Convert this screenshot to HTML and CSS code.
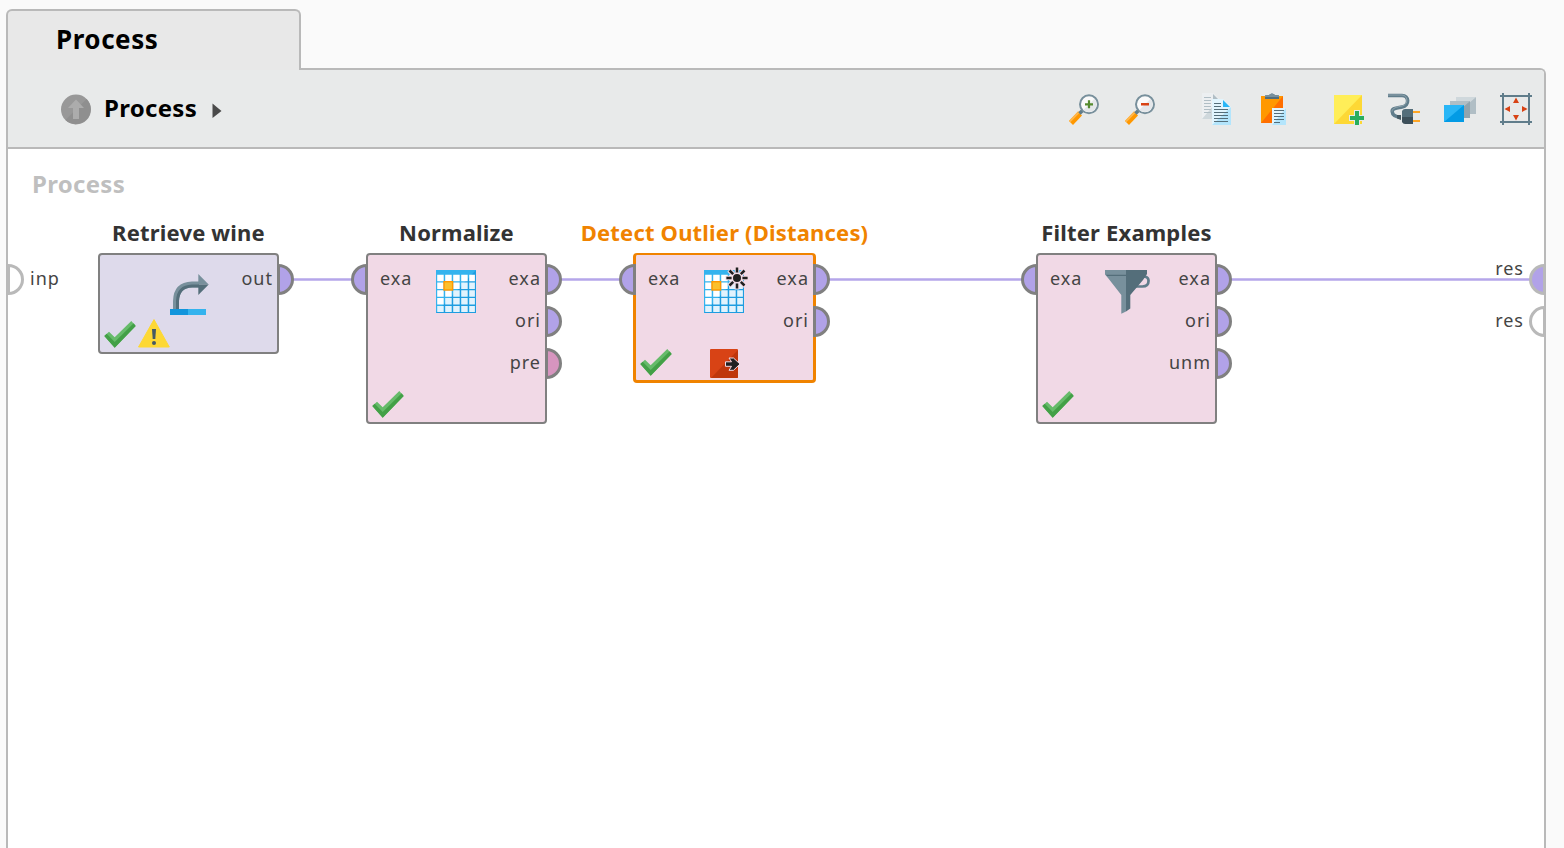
FILE: index.html
```html
<!DOCTYPE html>
<html lang="en">
<head>
<meta charset="utf-8">
<title>Process</title>
<link rel="stylesheet" href="styles.css">
</head>
<body>
<svg class="defs" aria-hidden="true">
  <defs>
    <symbol id="port-out" viewBox="0 0 17 31"><path d="M1.5 1.5A14 14 0 0 1 1.5 29.5Z" stroke-width="3"/></symbol>
    <symbol id="port-in" viewBox="0 0 17 31"><path d="M15.5 1.5A14 14 0 0 0 15.5 29.5Z" stroke-width="3"/></symbol>
    <symbol id="check" viewBox="0 0 32 32">
      <path fill="#66bb6a" d="M.3 18 5 13.7l5.7 5.6L27.3 3l4.4 5-21 21.7z"/>
      <path fill="#43a047" d="M.3 18l2.4-2.2 8 8.2 19-18.7L31.7 8l-21 21.7z"/>
    </symbol>
    <symbol id="warn" viewBox="0 0 32 32">
      <path fill="#fdd835" stroke="#fdd835" stroke-linejoin="round" d="M16 1.6 31.3 29H.5z"/>
      <path fill="#455a64" d="M14 11h4l-.7 10h-2.6z"/><circle cx="16" cy="25" r="2" fill="#455a64"/>
    </symbol>
    <symbol id="breakpoint" viewBox="0 0 32 32">
      <rect x="2" y="3" width="28" height="29" rx="1" fill="#d84315"/>
      <path fill="#bf360c" d="M30 4v27q0 1-1 1H3z"/>
      <path fill="#212121" stroke="#f3dbe6" stroke-width="1" d="M17.500 15.800h6l-2.500-3.800h4.500l6.500 6-6.500 6.300h-4.500l2.500-4h-6z"/>
    </symbol>
    <symbol id="table" viewBox="0 0 48 48">
      <path fill="#1e9de0" d="M4 2h40v43H4z"/>
      <path fill="#34b3ee" d="M4 2h40L4 45z"/>
      <g fill="#fff">
        <path d="M5.200 6.700h6.500v6.500H5.200zm8 0h6.500v6.500h-6.500zm8 0h6.500v6.500h-6.500zm8 0h6.500v6.500h-6.500zm8 0h5.700v6.500h-5.700z"/>
        <path d="M5.200 14.500h6.500v6.500H5.200zm8 0h6.500v6.500h-6.500zm8 0h6.500v6.500h-6.500z"/>
        <path d="M5.200 22.300h6.500v6.500H5.200zm8 0h6.500v6.500h-6.500zM5.200 30.100h6.500v6.500H5.200z"/>
      </g>
      <path fill="#e1f3fd" d="M29.200 14.500h6.500v6.500h-6.500zm8 0h5.700v6.500h-5.700zM21.200 22.300h6.500v6.500h-6.500zm8 0h6.500v6.500h-6.500zm8 0h5.700v6.500h-5.700zM13.200 30.100h6.500v6.500h-6.500zm8 0h6.500v6.500h-6.500zm8 0h6.500v6.500h-6.500zm8 0h5.700v6.500h-5.700zM5.200 37.900h6.500v6H5.200zm8 0h6.500v6h-6.500zm8 0h6.500v6h-6.500zm8 0h6.500v6h-6.500zm8 0h5.700v6h-5.700z"/>
      <rect x="12" y="13.700" width="8.600" height="8.300" fill="#fbc02d" stroke="#ff9800" stroke-width="1.400"/>
    </symbol>
    <symbol id="burst" viewBox="0 0 24 24">
      <path stroke="#f3dbe6" stroke-width="4.600" d="M12 .5v6M12 17.500v6M.5 12h6M17.500 12h6M4 4l4 4M16 16l4 4M4 20l4-4M16 8l4-4"/>
      <circle cx="12" cy="12" r="6" fill="#f3dbe6"/><circle cx="12" cy="12" r="4" fill="#212121"/>
      <path stroke="#212121" stroke-width="2.500" d="M12 1.400v5.200M12 17.400v5.200M1.400 12h5.200M17.400 12h5.200M4.500 4.500l3.700 3.700M15.800 15.800l3.700 3.700M4.500 19.500l3.700-3.700M15.800 8.200l3.700-3.700"/>
    </symbol>
    <symbol id="funnel" viewBox="0 0 48 48">
      <path fill="none" stroke="#607d8b" stroke-width="2.700" d="M38.500 9.400q7.500-2.500 8 3 .3 6.100-6.300 6.100h-7"/>
      <path fill="#78909c" d="M3 2h21v41.500l-4.700 2.200V27L6 10 3 6.500z"/>
      <path fill="#546e7a" d="M24 2h21v4l-4 6-12.700 15v13.500L24 43.500z"/>
      <path fill="#546e7a" d="M4 6.700h20v1.200H5z"/>
    </symbol>
    <symbol id="retrieve" viewBox="0 0 48 48">
      <path fill="#1295dc" d="M6 41h18v6H6z"/><path fill="#34b3ee" d="M24 41h18v6H24z"/>
      <path fill="none" stroke="#78909c" stroke-width="6" d="M12 41V33Q12.500 17 28 16.500h7"/>
      <path fill="none" stroke="#546e7a" stroke-width="3" d="M13.500 41V33Q14 18.500 28 18h7"/>
      <path fill="#78909c" d="M34.300 6v10.500h10.400z"/><path fill="#546e7a" d="M34.300 27V16.500h10.400z"/>
    </symbol>
  </defs>
</svg>

<div class="app">
  <div class="tab">Process</div>
  <main class="panel">
    <header class="toolbar">
      <svg class="up" viewBox="0 0 30 31"><circle cx="15" cy="15.500" r="15" fill="#989898"/><path fill="#8f8f8f" d="M25.600 4.900A15 15 0 0 1 4.400 26.100z"/><path fill="#acacac" d="M15 5.500l8 8.500h-5v11h-6V14H7z"/></svg>
      <span class="crumb">Process</span>
      <svg class="caret" viewBox="0 0 10 16"><path fill="#4a4a4a" d="M.5.500 9.500 8 .5 15z"/></svg>
      <div class="tools">
        <div class="group">
          <svg viewBox="0 0 32 32"><path stroke="#ff9800" stroke-width="5.500" d="M3 30 12 20.500"/><path stroke="#ffb74d" stroke-width="2" d="M1.700 28.500 11 19"/><path stroke="#607d8b" stroke-width="3.500" d="M11.500 20.500l3-3"/><circle cx="21" cy="11.300" r="9" fill="#fafafa" stroke="#78909c" stroke-width="2"/><path fill="#e4e7ea" d="M26.600 5.700a8 8 0 0 1-11.300 11.300z"/><path stroke="#558b2f" stroke-width="2.200" d="M17 11.300h8M21 7.300v8"/></svg>
          <svg viewBox="0 0 32 32"><path stroke="#ff9800" stroke-width="5.500" d="M3 30 12 20.500"/><path stroke="#ffb74d" stroke-width="2" d="M1.700 28.500 11 19"/><path stroke="#607d8b" stroke-width="3.500" d="M11.500 20.500l3-3"/><circle cx="21" cy="11.300" r="9" fill="#fafafa" stroke="#78909c" stroke-width="2"/><path fill="#e4e7ea" d="M26.600 5.700a8 8 0 0 1-11.300 11.300z"/><path stroke="#d84315" stroke-width="2.600" d="M17 11.300h8"/></svg>
        </div>
        <div class="group">
          <svg viewBox="0 0 32 32"><path fill="#eceff1" d="M2 0h11l6 6v20H2z"/><path fill="#cfd8dc" d="M19 6v20H2z"/><path fill="#b0bec5" d="M13 1v5h5z"/><path stroke="#b0bec5" stroke-width="1" d="M4 4.500h7M4 7.500h7M4 10.500h7M4 13.500h7M4 16.500h7M4 19.500h7"/><path fill="#e1f5fe" d="M12 6h11l8 8v18H12z"/><path fill="#b3e5fc" d="M31 14v18H12z"/><path fill="#29b6f6" d="M23 7v7h7z"/><path stroke="#546e7a" stroke-width="1" d="M14 10.500h7M14 13.500h7M14 16.500h14M14 19.500h14M14 22.500h14M14 25.500h14M14 28.500h14"/></svg>
          <svg viewBox="0 0 32 32"><path fill="#ff9800" d="M5 3h22v27H5z"/><path fill="#ff6f00" d="M27 3v27H5z"/><path fill="#546e7a" d="M9 6V2.500L13 2q3-3 6 0l4 .5V6z"/><path fill="#78909c" d="M9 4V2.500L13 2q3-3 6 0l4 .5V4z"/><path fill="#e1f5fe" d="M16 15h14v17H16z"/><path fill="#b3e5fc" d="M30 15v17H16z"/><path stroke="#546e7a" d="M18 17.500h10M18 20.500h10M18 23.500h10M18 26.500h10M18 29.500h6"/></svg>
        </div>
        <div class="group">
          <svg viewBox="0 0 32 32"><path fill="#ffee58" d="M2 2h28v29H2z"/><path fill="#fdd835" d="M30 2v29H2z"/><path stroke="#e8eaea" stroke-width="6" d="M25 17v16M17 25h16"/><path stroke="#27ae60" stroke-width="4" d="M25 18v14M18 25h14"/></svg>
          <svg viewBox="0 0 32 32"><path fill="none" stroke="#607d8b" stroke-width="3.600" d="M0 2.500h14c7 0 8 10 0 11.500C9 15 4 15 4.200 18.500 4.500 23 8 24 13 24.200"/><path fill="none" stroke="#90a4ae" d="M0 2h14c6 0 7 9.500 0 11C9 14 4 15 4 18.500"/><path fill="#455a64" d="M9 22h4v5l-4-1.500z"/><path fill="#546e7a" d="M14 18q1-2 3-2h8v8H14z"/><path fill="#3d505a" d="M14 24h11v7h-8q-2 0-3-2z"/><path stroke="#ffa726" stroke-width="2" d="M25 19h7M25 28h7"/></svg>
          <svg viewBox="0 0 32 32"><path fill="#cfd8dc" d="M12 4h20L12 21z"/><path fill="#b0bec5" d="M32 4v17H12z"/><path fill="#b0bec5" d="M6 8h20L6 25z"/><path fill="#90a4ae" d="M26 8v17H6z"/><path fill="#29b6f6" d="M0 12h20v17H0z"/><path fill="#039be5" d="M20 12v17H0z"/></svg>
          <svg viewBox="0 0 32 32"><path fill="none" stroke="#607d8b" stroke-width="2" d="M0 3h32M0 29h32M3 0v32M29 0v32"/><path fill="#d84315" d="M16 4.500l3 5.500h-6zM16 27.500l3-5.500h-6zM4.500 16l5.500-3v6zM27.500 16 22 13v6z"/></svg>
        </div>
      </div>
    </header>

    <section class="canvas">
      <h1 class="canvas-title">Process</h1>
      <svg class="wires" viewBox="0 0 1536 699"><path d="M285 130.500h60M552 130.500h60M820 130.500h195M1222 130.500h302"/></svg>

      <div class="edge edge-in"><svg class="port gray"><use href="#port-out"/></svg><span>inp</span></div>
      <div class="edge edge-res first"><span>res</span><svg class="port gray filled"><use href="#port-in"/></svg></div>
      <div class="edge edge-res second"><span>res</span><svg class="port gray"><use href="#port-in"/></svg></div>

      <article class="node retrieve">
        <h2>Retrieve wine</h2>
        <div class="ins"></div>
        <svg class="glyph"><use href="#retrieve"/></svg>
        <div class="outs"><div><span>out</span><svg class="port"><use href="#port-out"/></svg></div></div>
        <div class="status"><svg><use href="#check"/></svg><svg><use href="#warn"/></svg></div>
      </article>

      <article class="node normalize">
        <h2>Normalize</h2>
        <div class="ins"><div><span>exa</span><svg class="port"><use href="#port-in"/></svg></div></div>
        <svg class="glyph"><use href="#table"/></svg>
        <div class="outs">
          <div><span>exa</span><svg class="port"><use href="#port-out"/></svg></div>
          <div><span>ori</span><svg class="port"><use href="#port-out"/></svg></div>
          <div><span>pre</span><svg class="port pink"><use href="#port-out"/></svg></div>
        </div>
        <div class="status"><svg><use href="#check"/></svg></div>
      </article>

      <article class="node outlier">
        <h2>Detect Outlier (Distances)</h2>
        <div class="ins"><div><span>exa</span><svg class="port"><use href="#port-in"/></svg></div></div>
        <svg class="glyph"><use href="#table"/><use href="#burst" x="25" y="-2" width="24" height="24"/></svg>
        <div class="outs">
          <div><span>exa</span><svg class="port"><use href="#port-out"/></svg></div>
          <div><span>ori</span><svg class="port"><use href="#port-out"/></svg></div>
        </div>
        <div class="status"><svg><use href="#check"/></svg><svg class="break"><use href="#breakpoint"/></svg></div>
      </article>

      <article class="node filter">
        <h2>Filter Examples</h2>
        <div class="ins"><div><span>exa</span><svg class="port"><use href="#port-in"/></svg></div></div>
        <svg class="glyph"><use href="#funnel"/></svg>
        <div class="outs">
          <div><span>exa</span><svg class="port"><use href="#port-out"/></svg></div>
          <div><span>ori</span><svg class="port"><use href="#port-out"/></svg></div>
          <div><span>unm</span><svg class="port"><use href="#port-out"/></svg></div>
        </div>
        <div class="status"><svg><use href="#check"/></svg></div>
      </article>
    </section>
  </main>
</div>
</body>
</html>
```
FILE: styles.css
```css
* { box-sizing: border-box; }
body {
  margin: 0;
  height: 848px;
  overflow: hidden;
  background: #fafafa;
  font-family: "Noto Sans", "Open Sans", sans-serif;
}
svg { display: block; flex: none; }
.defs { position: absolute; width: 0; height: 0; }
h1, h2 { margin: 0; }

.app { display: flex; flex-direction: column; height: 848px; padding: 9px 18px 0 6px; }

.tab {
  position: relative;
  width: 295px;
  height: 61px;
  margin-bottom: -2px;
  padding-left: 48px;
  border: 2px solid #b9b9b9;
  border-bottom: 0;
  border-radius: 6px 6px 0 0;
  background: #e8e8e8;
  font-size: 26px;
  font-weight: 700;
  line-height: 56px;
  letter-spacing: .55px;
}

.panel {
  flex: 1;
  display: flex;
  flex-direction: column;
  border: 2px solid #b9b9b9;
  border-bottom: 0;
  border-top-right-radius: 6px;
  background: #fff;
  overflow: hidden;
}

.toolbar {
  display: flex;
  align-items: center;
  height: 79px;
  padding: 1px 12px 0 53px;
  background: #e8eaea;
  border-bottom: 2px solid #b9b9b9;
}
.up { width: 30px; height: 31px; }
.crumb { margin: -2px 0 0 13px; font-size: 24px; font-weight: 700; line-height: 36px; letter-spacing: .3px; }
.caret { width: 10px; height: 16px; margin: 4px 0 0 15px; }
.tools { display: flex; gap: 44px; margin-left: auto; }
.group { display: flex; gap: 24px; }
.group svg { width: 32px; height: 32px; }

.canvas { flex: 1; position: relative; color: #444; font-size: 18px; letter-spacing: 1px; }
.canvas-title { padding: 18px 0 0 24px; font-size: 24px; line-height: 34px; color: #bfbfbf; letter-spacing: .3px; }

.wires { position: absolute; left: 0; top: 0; width: 1536px; height: 699px; fill: none; stroke: #b5a6ea; stroke-width: 2.5; }

.port { width: 17px; height: 31px; fill: #b1a2e8; stroke: #808080; }
.port.pink { fill: #d795bf; }
.port.gray { fill: #fff; stroke: #b9b9b9; }
.port.gray.filled { fill: #b1a2e8; }

.edge { position: absolute; display: flex; line-height: 29px; }
.edge-in { left: -1px; top: 115px; gap: 6px; }
.edge-res { right: -2px; gap: 5px; }
.edge-res.first { top: 115px; }
.edge-res.first span { margin-top: -10px; }
.edge-res.second { top: 157px; }

/* Operator nodes are freely placed on the canvas. */
.node {
  position: absolute;
  top: 104px;
  width: 181px;
  display: grid;
  grid-template-columns: 64px 48px 1fr;
  grid-template-rows: 1fr;
  border: 2px solid #808080;
  border-radius: 4px;
  background: #f1d9e6;
}
.node h2 {
  position: absolute;
  left: 50%;
  bottom: 100%;
  transform: translateX(-50%);
  white-space: nowrap;
  font-size: 22px;
  line-height: 32px;
  margin-bottom: 7px;
  color: #333;
  letter-spacing: .18px;
}
.retrieve { left: 90px; height: 101px; background: #dedaeb; }
.normalize { left: 358px; height: 171px; }
.outlier { left: 625px; width: 183px; height: 130px; border: 3px solid #f08300; border-top-width: 2px; }
.node.outlier h2 { color: #f08300; }
.filter { left: 1028px; height: 171px; }

.glyph { width: 48px; height: 48px; margin-top: 13px; overflow: visible; }
.ins, .outs { display: flex; flex-direction: column; gap: 11px; padding-top: 9px; }
.ins > div, .outs > div { position: relative; height: 31px; line-height: 29px; }
.ins > div { padding-left: 12px; }
.outs > div { padding-right: 4px; text-align: right; }
.ins .port { position: absolute; right: 100%; top: 0; }
.outs .port { position: absolute; left: 100%; top: 0; }

.status { position: absolute; left: 4px; bottom: 2px; display: flex; gap: 2px; }
.status svg { width: 32px; height: 32px; }
.status .break { margin-left: 34px; }
```
